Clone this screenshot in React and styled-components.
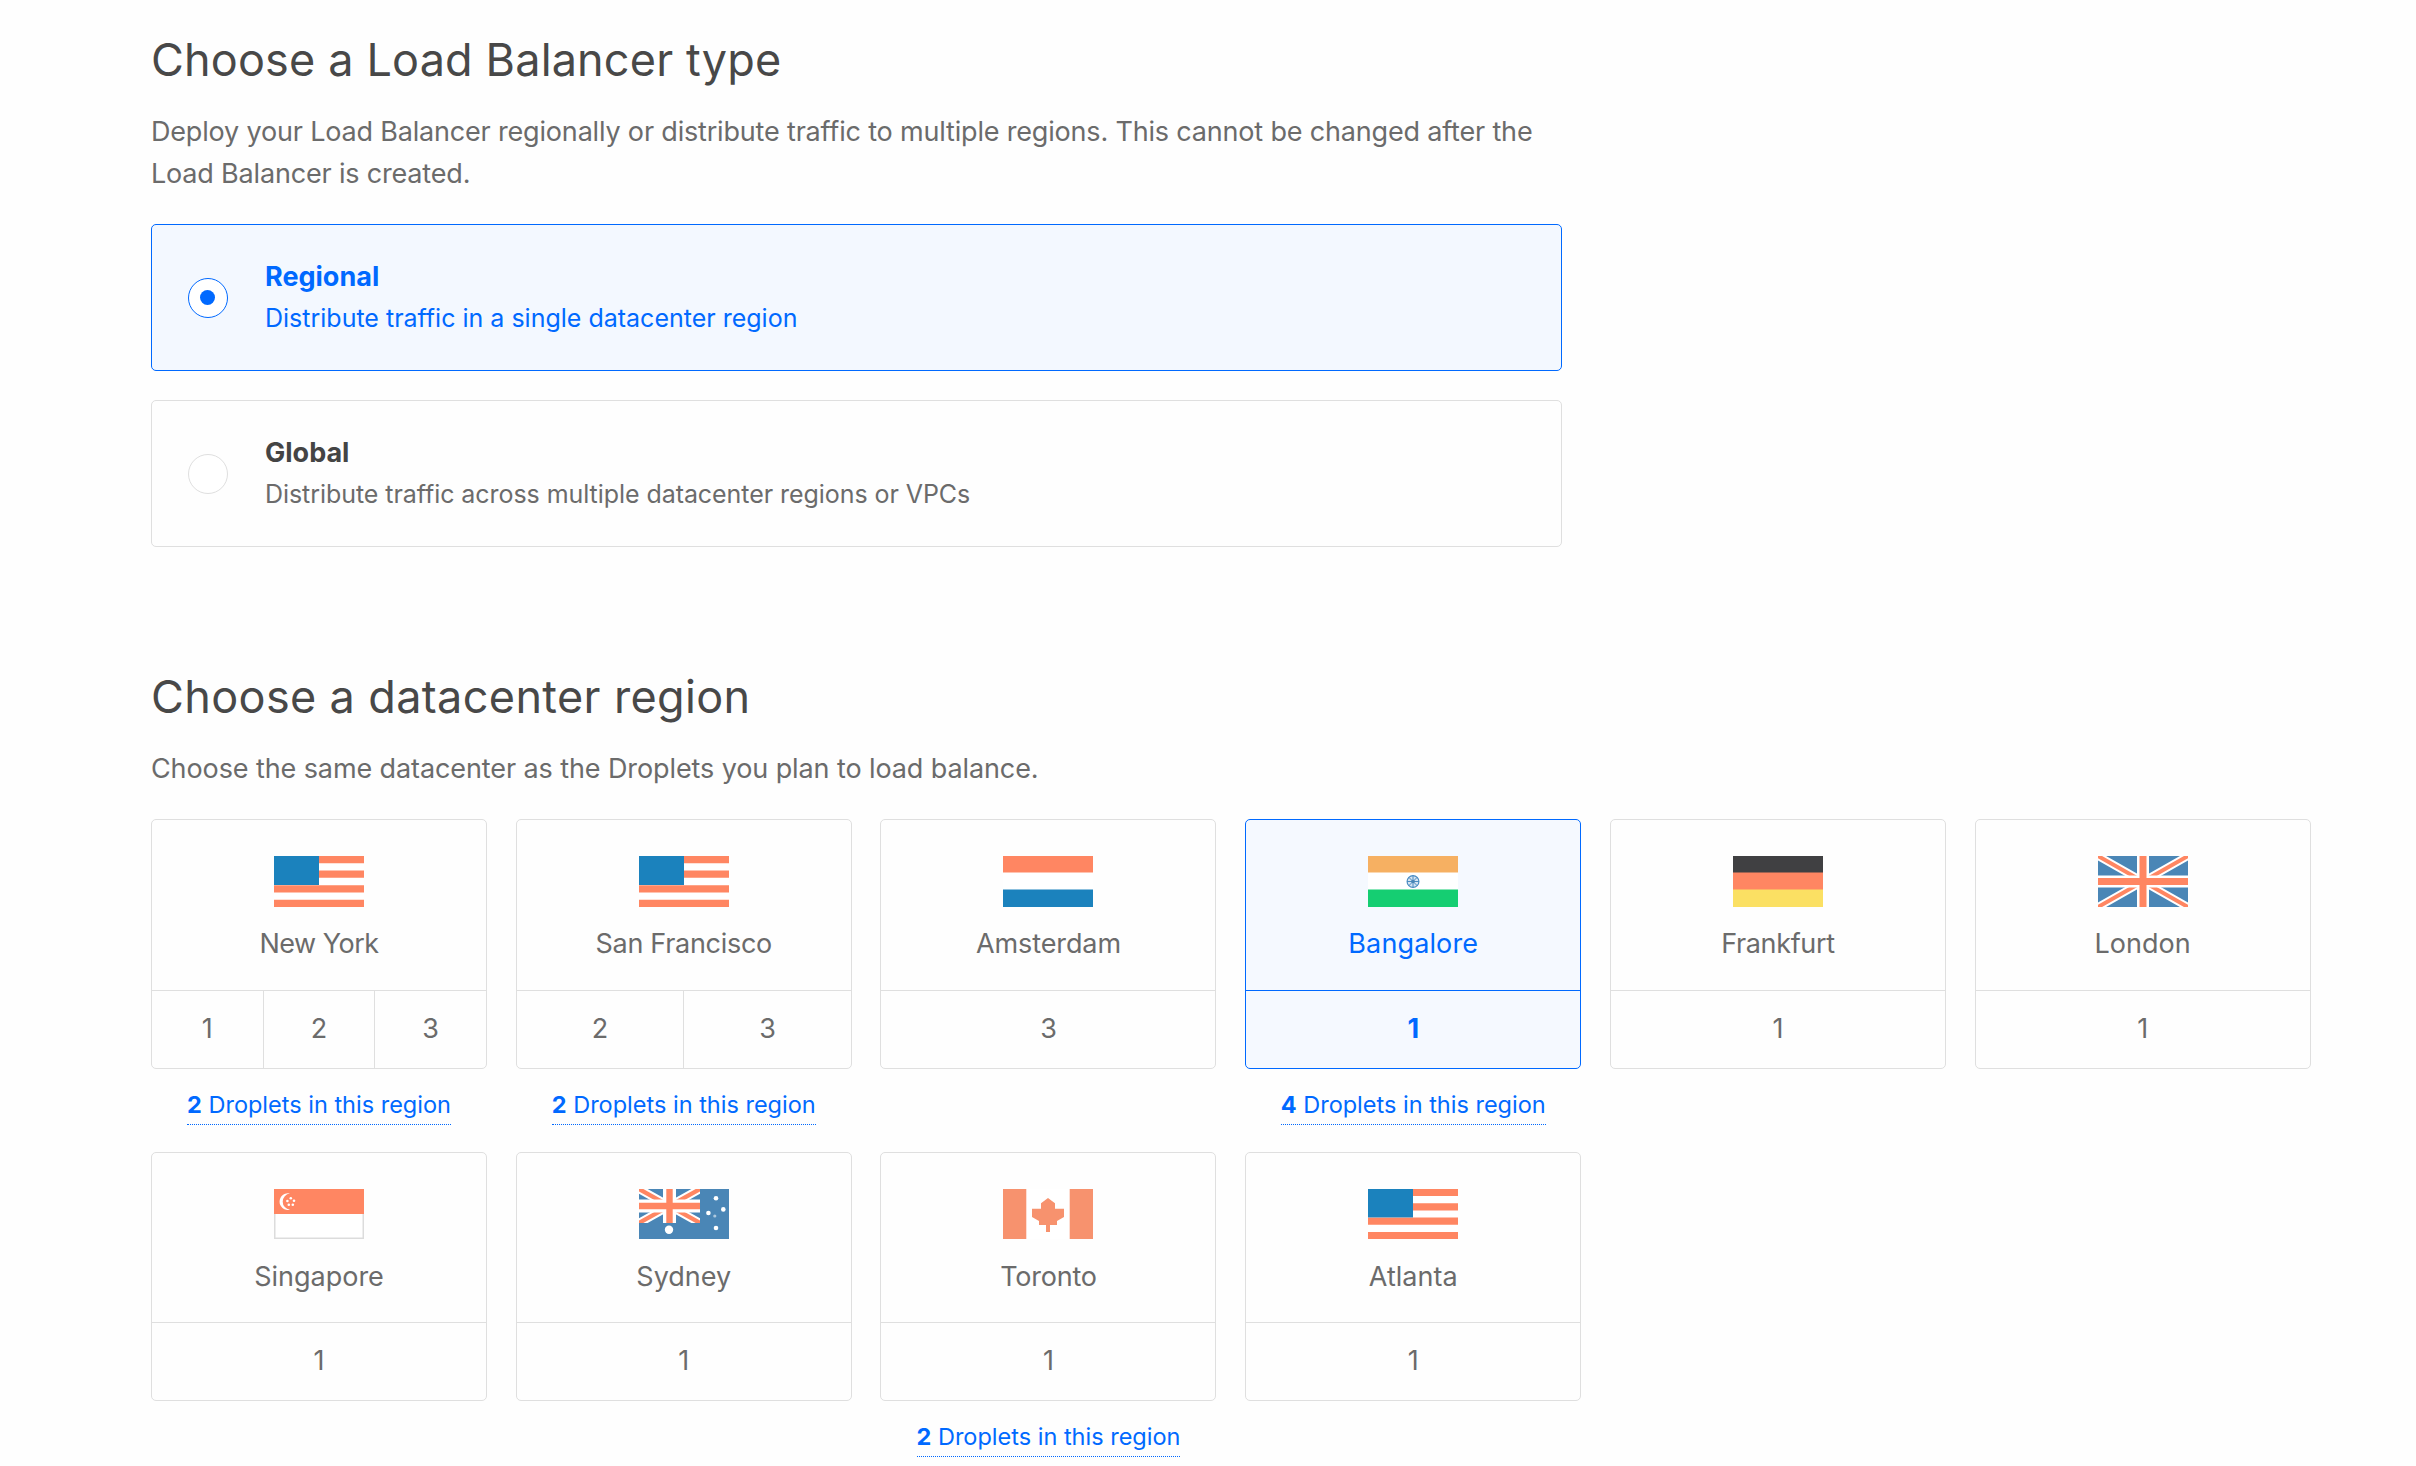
import React, { useState } from "react";
import styled, { createGlobalStyle } from "styled-components";

const lbTypes = [
  {
    id: "regional",
    name: "Regional",
    text: "Distribute traffic in a single datacenter region",
    spacing: 0,
  },
  {
    id: "global",
    name: "Global",
    text: "Distribute traffic across multiple datacenter regions or VPCs",
    spacing: -0.06,
  },
];

const regions = [
  { name: "New York", flag: "us", zones: [1, 2, 3], droplets: 2, spacing: -0.5 },
  { name: "San Francisco", flag: "us", zones: [2, 3], droplets: 2, spacing: -0.3 },
  { name: "Amsterdam", flag: "nl", zones: [3], spacing: -0.1 },
  { name: "Bangalore", flag: "in", zones: [1], droplets: 4, spacing: 0.12 },
  { name: "Frankfurt", flag: "de", zones: [1], spacing: -0.35 },
  { name: "London", flag: "gb", zones: [1], spacing: 0.05 },
  { name: "Singapore", flag: "sg", zones: [1], short: true },
  { name: "Sydney", flag: "au", zones: [1], short: true },
  { name: "Toronto", flag: "ca", zones: [1], droplets: 2, short: true, spacing: -0.24 },
  { name: "Atlanta", flag: "us", zones: [1], short: true },
];

const Stripes = ({ colors }) =>
  colors.map((color, i) => (
    <rect key={i} y={i * 17 - (i ? 0.5 : 0)} width="90" height="17.5" fill={color} />
  ));

const UnionJack = ({ w, h, cross, edge, band }) => (
  <>
    <rect width={w} height={h} fill="#4a86b6" />
    <path d={`M0 0L${w} ${h}M${w} 0L0 ${h}`} stroke="#fff" strokeWidth={band * 2} />
    <path d={`M0 0L${w} ${h}M${w} 0L0 ${h}`} stroke="#ff8662" strokeWidth={band} />
    <path d={`M${w / 2} 0V${h}M0 ${h / 2}H${w}`} stroke="#fff" strokeWidth={edge} />
    <path d={`M${w / 2} 0V${h}M0 ${h / 2}H${w}`} stroke="#ff8662" strokeWidth={cross} />
  </>
);

const flags = {
  us: (
    <>
      <rect width="90" height="51" fill="#fff" />
      <path
        d="M0 3.6H90M0 18.2H90M0 32.8H90M0 47.4H90"
        stroke="#ff8662"
        strokeWidth="7.3"
      />
      <rect width="45" height="29" fill="#1b82bd" />
    </>
  ),
  nl: <Stripes colors={["#ff8662", "#fff", "#1b82bd"]} />,
  in: (
    <>
      <Stripes colors={["#f6b062", "#fff", "#15ce72"]} />
      <circle cx="45" cy="25.5" r="5.9" fill="#d5e3f1" stroke="#4a8cc2" strokeWidth="1.2" />
      <path
        d="M45 19.5V31.5M39 25.5H51M40.8 21.3L49.2 29.7M49.2 21.3L40.8 29.7"
        stroke="#4a8cc2"
        strokeWidth="1"
      />
      <circle cx="45" cy="25.5" r="1.8" fill="#4a86b6" />
    </>
  ),
  de: <Stripes colors={["#404042", "#ff8662", "#fbe063"]} />,
  gb: <UnionJack w={90} h={51} cross={7} edge={12} band={4} />,
  sg: (
    <>
      <rect x="0.75" y="1" width="88.5" height="48.25" fill="#fff" stroke="#dcdcdc" strokeWidth="1.5" />
      <rect width="90" height="25" fill="#ff8662" />
      <path d="M16 4.5A8.4 8.4 0 1 0 16 20.8A8.2 8.2 0 0 1 16 4.5Z" fill="#fff" />
      <g fill="#fff">
        <circle cx="16.8" cy="9.3" r="1.3" />
        <circle cx="13.4" cy="12" r="1.3" />
        <circle cx="20" cy="11.8" r="1.3" />
        <circle cx="14.8" cy="15.7" r="1.3" />
        <circle cx="18.8" cy="15.7" r="1.3" />
      </g>
    </>
  ),
  au: (
    <>
      <rect width="90" height="50" fill="#4a86b6" />
      <svg width="61" height="34">
        <UnionJack w={61} h={34} cross={6.4} edge={13} band={4.2} />
      </svg>
      <g fill="#fff">
        <circle cx="30" cy="40.8" r="4.2" />
        <circle cx="77" cy="9.3" r="2.3" />
        <circle cx="84.3" cy="20.4" r="2.3" />
        <circle cx="69.4" cy="24" r="2.3" />
        <circle cx="77" cy="39" r="2.3" />
        <circle cx="75.8" cy="27" r="1.6" opacity="0.55" />
      </g>
    </>
  ),
  ca: (
    <>
      <rect width="90" height="50" fill="#fff" />
      <path d="M0 0H23.3V50H0ZM66.7 0H90V50H66.7Z" fill="#f7926e" />
      <path
        d="M45 9L52 14.3V19.7H61V28L54 32V36H47V43H43V36H36V32L29 28V19.7H38V14.3Z"
        fill="#f7926e"
      />
    </>
  ),
};

function App() {
  const [lbType, setLbType] = useState("regional");
  const [region, setRegion] = useState("Bangalore");

  return (
    <Page>
      <GlobalStyle />
      <Section>
        <Title $spacing={0.16}>Choose a Load Balancer type</Title>
        <Description $spacing={-0.18}>
          Deploy your Load Balancer regionally or distribute traffic to multiple
          regions. This cannot be changed after the Load Balancer is created.
        </Description>
        <TypeList>
          {lbTypes.map(({ id, name, text, spacing }) => (
            <TypeCard key={id} $active={id === lbType} onClick={() => setLbType(id)}>
              <Radio $active={id === lbType} />
              <div>
                <TypeName $active={id === lbType}>{name}</TypeName>
                <TypeInfo $spacing={spacing}>{text}</TypeInfo>
              </div>
            </TypeCard>
          ))}
        </TypeList>
      </Section>
      <Section>
        <Title $spacing={0.36}>Choose a datacenter region</Title>
        <Description $spacing={-0.1}>
          Choose the same datacenter as the Droplets you plan to load balance.
        </Description>
        <RegionGrid>
          {regions.map(({ name, flag, zones, droplets, spacing = 0, short }) => (
            <RegionItem key={name}>
              <RegionCard $active={name === region} onClick={() => setRegion(name)}>
                <RegionTop $short={short}>
                  <Flag
                    viewBox={flag === "us" ? "0 0 90 51" : `0 0 90 ${short ? 50 : 51}`}
                    preserveAspectRatio="none"
                    $short={short}
                  >
                    {flags[flag]}
                  </Flag>
                  <RegionName $spacing={spacing}>{name}</RegionName>
                </RegionTop>
                <Zones>
                  {zones.map((zone) => (
                    <Zone key={zone}>{zone}</Zone>
                  ))}
                </Zones>
              </RegionCard>
              {droplets && (
                <DropletLink>
                  <b>{droplets}</b> Droplets in this region
                </DropletLink>
              )}
            </RegionItem>
          ))}
        </RegionGrid>
      </Section>
    </Page>
  );
}

const GlobalStyle = createGlobalStyle`
  * {
    box-sizing: border-box;
  }
  body {
    margin: 0;
    overflow: hidden;
    background-color: #fefefe;
  }
`;

const Page = styled.div`
  height: 1466px;
  overflow: hidden;
  padding: 30px 105.3px 0 151px;
  font-family: Inter, "Open Sans", sans-serif;
  color: #6b6b6b;
`;

const Section = styled.section`
  margin-bottom: 120px;
`;

const Title = styled.h2`
  margin: 0 0 21px;
  font-size: 45px;
  font-weight: 400;
  line-height: 60px;
  letter-spacing: ${({ $spacing }) => $spacing}px;
  color: #484848;
`;

const Description = styled.p`
  width: 1412px;
  margin: 0 0 29px;
  font-size: 27px;
  line-height: 42px;
  letter-spacing: ${({ $spacing }) => $spacing}px;
`;

const TypeList = styled.div`
  display: flex;
  flex-direction: column;
  gap: 29px;
  width: 1411px;
`;

const TypeCard = styled.div`
  display: flex;
  align-items: center;
  gap: 37.5px;
  height: 147px;
  padding: 0 35.5px;
  border: 1px solid ${({ $active }) => ($active ? "#0069ff" : "#dfdfdf")};
  border-radius: 5px;
  color: ${({ $active }) => ($active ? "#0069ff" : "inherit")};
  background-color: ${({ $active }) => ($active ? "#f3f8ff" : "transparent")};
  cursor: pointer;
`;

const Radio = styled.span`
  display: flex;
  align-items: center;
  justify-content: center;
  width: 40px;
  height: 40px;
  border: 1px solid ${({ $active }) => ($active ? "#0069ff" : "#dfdfdf")};
  border-radius: 50%;
  background-color: #fff;
  &::after {
    content: "";
    width: 15px;
    height: 15px;
    border-radius: 50%;
    background-color: ${({ $active }) => ($active ? "#0069ff" : "transparent")};
  }
`;

const TypeName = styled.div`
  font-size: 27px;
  font-weight: 700;
  line-height: 42px;
  color: ${({ $active }) => ($active ? "#0069ff" : "#444")};
`;

const TypeInfo = styled.div`
  font-size: 25px;
  line-height: 41px;
  letter-spacing: ${({ $spacing }) => $spacing}px;
`;

const RegionGrid = styled.div`
  display: grid;
  grid-template-columns: repeat(6, 336px);
  justify-content: space-between;
  row-gap: 27px;
`;

const RegionItem = styled.div`
  display: flex;
  flex-direction: column;
  align-items: center;
  min-height: 306px;
`;

const RegionCard = styled.div`
  --line: ${({ $active }) => ($active ? "#0069ff" : "#dfdfdf")};
  --zone-weight: ${({ $active }) => ($active ? 700 : 400)};
  width: 100%;
  border: 1px solid var(--line);
  border-radius: 5px;
  font-size: 27px;
  color: ${({ $active }) => ($active ? "#0069ff" : "inherit")};
  background-color: ${({ $active }) => ($active ? "#f5f9ff" : "transparent")};
  cursor: pointer;
`;

const RegionTop = styled.div`
  display: flex;
  flex-direction: column;
  align-items: center;
  gap: ${({ $short }) => ($short ? 17 : 16)}px;
  padding: 36px 0 ${({ $short }) => ($short ? 24 : 25)}px;
`;

const Flag = styled.svg`
  display: block;
  width: 90px;
  height: ${({ $short }) => ($short ? 50 : 51)}px;
`;

const RegionName = styled.div`
  line-height: 42px;
  letter-spacing: ${({ $spacing }) => $spacing}px;
`;

const Zones = styled.div`
  display: flex;
  border-top: 1px solid var(--line);
`;

const Zone = styled.div`
  flex: 1;
  height: 77px;
  line-height: 75px;
  text-align: center;
  font-weight: var(--zone-weight);
  &:not(:last-child) {
    border-right: 1px solid var(--line);
  }
`;

const DropletLink = styled.a`
  margin-top: 19px;
  padding-bottom: 2px;
  border-bottom: 1px dotted #0069ff;
  font-size: 23.5px;
  line-height: 34px;
  white-space: nowrap;
  color: #0069ff;
  cursor: pointer;
`;

export default App;
